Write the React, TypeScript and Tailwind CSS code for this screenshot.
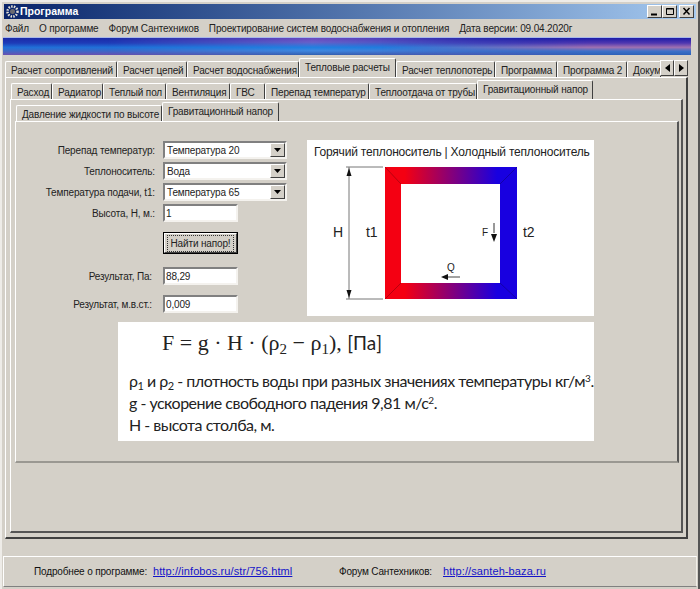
import type { ReactNode } from "react";

const TOP_TABS = [
  { label: "Расчет сопротивлений", w: "w-[112px]" },
  { label: "Расчет цепей", w: "w-[70px]" },
  { label: "Расчет водоснабжения", w: "w-[112px]" },
  { label: "Тепловые расчеты", w: "w-[97px]", active: true },
  { label: "Расчет теплопотерь", w: "w-[99px]" },
  { label: "Программа", w: "w-[62px]" },
  { label: "Программа 2", w: "w-[70px]" },
  { label: "Документация", w: "w-[34px]" },
];

const SUB_TABS = [
  { label: "Расход", w: "w-[41px]" },
  { label: "Радиатор", w: "w-[51px]" },
  { label: "Теплый пол", w: "w-[63px]" },
  { label: "Вентиляция", w: "w-[64px]" },
  { label: "ГВС", w: "w-[35px]" },
  { label: "Перепад температур", w: "w-[104px]" },
  { label: "Теплоотдача от трубы", w: "w-[108px]" },
  { label: "Гравитационный напор", w: "w-[116px]", active: true },
];

const raised =
  "border border-t-white border-l-white border-r-[#404040] border-b-[#404040]";
const sunken =
  "border-2 border-t-[#808080] border-l-[#808080] border-r-[#f4f2ee] border-b-[#f4f2ee]";

function Tab({ label, w, active }: { label: string; w: string; active?: boolean }) {
  return (
    <div
      className={`${w} shrink-0 overflow-hidden whitespace-nowrap rounded-t-[2px] border-t border-l border-r border-t-white border-l-white border-r-[#404040] bg-[#d4d0c8] pl-[5px] leading-[15px] text-[#222] ${
        active ? "relative z-10 -mb-px h-[19px] pt-[1px]" : "mt-[3px] h-[16px] pt-[1px]"
      }`}
    >
      {label}
    </div>
  );
}

function Select({ value }: { value: string }) {
  return (
    <div className={`flex h-[18px] w-[124px] items-center bg-white pl-[2px] ${sunken}`}>
      <span className="flex-1 text-[#222]">{value}</span>
      <span className={`flex h-[14px] w-[15px] items-center justify-center bg-[#d4d0c8] ${raised}`}>
        <svg width="7" height="4" viewBox="0 0 7 4">
          <path d="M0 0h7L3.500 4z" fill="#000" />
        </svg>
      </span>
    </div>
  );
}

function Input({ value }: { value: string }) {
  return (
    <div className={`flex h-[18px] w-[75px] items-center bg-white pl-[1px] text-[#222] ${sunken}`}>
      {value}
    </div>
  );
}

function Row({ label, mt, inset, children }: { label: string; mt: string; inset?: boolean; children: ReactNode }) {
  return (
    <div className={`flex items-center ${mt}`}>
      <div className={`w-[139px] shrink-0 whitespace-nowrap text-right text-[#222] ${inset ? "pr-[3px]" : ""}`}>
        {label}
      </div>
      <div className="ml-[8px]">{children}</div>
    </div>
  );
}

function CaptionButton({ children }: { children: ReactNode }) {
  return (
    <div className={`flex h-[13px] w-[15px] items-center justify-center bg-[#d4d0c8] ${raised}`}>
      <svg width="10" height="9" viewBox="0 0 10 9" fill="none" stroke="#000">
        {children}
      </svg>
    </div>
  );
}

function ScrollArrow({ d }: { d: string }) {
  return (
    <div className={`flex h-[16px] w-[14px] items-center justify-center bg-[#d4d0c8] ${raised}`}>
      <svg width="5" height="8" viewBox="0 0 5 8">
        <path d={d} fill="#000" />
      </svg>
    </div>
  );
}

function Diagram() {
  return (
    <svg width="287" height="150" viewBox="307 165 287 150" className="block">
      <defs>
        <linearGradient id="pipe" x1="385" x2="517" y1="0" y2="0" gradientUnits="userSpaceOnUse">
          <stop offset="0" stopColor="#f40012" />
          <stop offset="0.15" stopColor="#f40012" />
          <stop offset="0.85" stopColor="#1800e0" />
          <stop offset="1" stopColor="#1800e0" />
        </linearGradient>
      </defs>
      <path d="M385 166h132v132h-132zM401 183v99h99v-99z" fill="url(#pipe)" fillRule="evenodd" />
      <path d="M385 166l16 17M517 166l-17 17M385 298l16-16M517 298l-17-16" stroke="#000" strokeOpacity="0.35" strokeWidth="0.7" />
      <path d="M346 166h37M346 298h37M349 166v132" stroke="#777" strokeWidth="1" fill="none" />
      <path d="M349 167l-2.500 8h5zM349 297l-2.500-8h5z" fill="#111" />
      <path d="M494 222v10" stroke="#333" />
      <path d="M491 233h6l-3 8z" fill="#111" />
      <path d="M460 276h-12" stroke="#444" />
      <path d="M448 273v6l-7-3z" fill="#111" />
      <g fontFamily="'Liberation Sans', sans-serif" fill="#222">
        <text x="333" y="236" fontSize="14">H</text>
        <text x="366" y="236" fontSize="14">t1</text>
        <text x="523" y="236" fontSize="14">t2</text>
        <text x="482" y="235" fontSize="10">F</text>
        <text x="447" y="270" fontSize="10">Q</text>
      </g>
    </svg>
  );
}

export default function App() {
  return (
    <div className="h-[589px] w-[700px] overflow-hidden border-t-2 border-l-2 border-r-2 border-t-[#eeece8] border-l-[#eeece8] border-r-[#555] bg-[#d4d0c8] font-['Liberation_Sans',sans-serif] text-[10px] tracking-[-0.15px]">
      {/* title bar */}
      <div className="mx-[2px] mt-[2px] flex h-[15px] items-center bg-gradient-to-r from-[#0a246a] to-[#a6caf0] pl-[2px] pr-[2px] text-white">
        <svg width="13" height="13" viewBox="0 0 13 13" className="mr-[1px]">
          <circle cx="6.500" cy="6.500" r="5" fill="none" stroke="#e8e4d8" strokeWidth="2.500" strokeDasharray="1.500 1.200" />
          <circle cx="6.500" cy="6.500" r="2.500" fill="#6a6a70" />
        </svg>
        <span className="flex-1 text-[10.500px] font-bold tracking-normal">Программа</span>
        <div className="flex">
          <CaptionButton>
            <path d="M1 7.500h6" strokeWidth="2" />
          </CaptionButton>
          <CaptionButton>
            <path d="M1.500 1.500h7v6h-7zM1 2h8" />
          </CaptionButton>
          <div className="ml-[2px]">
            <CaptionButton>
              <path d="M1.500 1l6 6.500M7.500 1l-6 6.500" strokeWidth="1.500" />
            </CaptionButton>
          </div>
        </div>
      </div>

      {/* menu */}
      <div className="flex h-[18px] items-center gap-[10px] pl-[3px] text-[#222]">
        <span>Файл</span>
        <span>О программе</span>
        <span>Форум Сантехников</span>
        <span>Проектирование систем водоснабжения и отопления</span>
        <span>Дата версии: 09.04.2020г</span>
      </div>

      {/* banner: three blended colour bands, left to right */}
      <div className="relative ml-[1px] mr-[7px] h-[18px] overflow-hidden border-t border-t-[#a8b8e8] bg-[linear-gradient(to_bottom,#1a2aa8_0%,#1e3cb8_30%,#2070d8_55%,#3a68c8_75%,#6a50b0_100%)]">
        <div className="absolute inset-0 bg-[linear-gradient(to_bottom,#6a48c0_0%,#6860c8_25%,#2080e0_55%,#4088e0_75%,#3060b0_100%)] [mask-image:linear-gradient(to_right,transparent_15%,black_45%,transparent_80%)]" />
        <div className="absolute inset-0 bg-[linear-gradient(to_bottom,#1c1ca8_0%,#5038b0_30%,#a070b0_55%,#3a70c8_78%,#2c60b8_100%)] [mask-image:linear-gradient(to_right,transparent_55%,black_85%)]" />
      </div>

      {/* outer tabs */}
      <div className="relative mt-[3px] flex h-[19px] pl-[3px]">
        {TOP_TABS.map((tab) => (
          <Tab key={tab.label} {...tab} />
        ))}
        <div className="absolute right-[10px] top-[2px] flex bg-[#d4d0c8]">
          <ScrollArrow d="M0 4l5-4v8z" />
          <ScrollArrow d="M5 4L0 0v8z" />
        </div>
      </div>

      {/* outer page */}
      <div className="ml-[3px] mr-[10px] h-[462px] border-t border-l border-r-2 border-b-2 border-t-white border-l-white border-r-[#404040] border-b-[#404040] pl-[4px] pr-[3px] pt-[2px]">
        <div className="flex h-[19px] pl-[1px]">
          {SUB_TABS.map((tab) => (
            <Tab key={tab.label} {...tab} />
          ))}
        </div>

        <div className="h-[434px] border-t border-l border-r-2 border-b-2 border-t-white border-l-white border-r-[#555] border-b-[#555] pl-[4px] pr-[2px] pt-[2px]">
          <div className="flex h-[19px] pl-[1px]">
            <Tab label="Давление жидкости по высоте" w="w-[146px]" />
            <Tab label="Гравитационный напор" w="w-[117px]" active />
          </div>

          <div className="h-[342px] border-t border-l border-r-2 border-b-2 border-t-white border-l-white border-r-[#555] border-b-[#9a9892]">
            <div className="flex items-start">
              {/* form */}
              <div className="w-[291px] pt-[19px]">
                <Row label="Перепад температур:" mt="mt-0">
                  <Select value="Температура 20" />
                </Row>
                <Row label="Теплоноситель:" mt="mt-[3px]">
                  <Select value="Вода" />
                </Row>
                <Row label="Температура подачи, t1:" mt="mt-[3px]">
                  <Select value="Температура 65" />
                </Row>
                <Row label="Высота, Н, м.:" mt="mt-[3px]">
                  <Input value="1" />
                </Row>
                <div className="ml-[147px] mt-[10px]">
                  <div className="flex h-[22px] w-[75px] items-center justify-center border border-black bg-[#d4d0c8]">
                    <div className="flex h-[20px] w-[73px] items-center justify-center border border-t-white border-l-white border-r-[#404040] border-b-[#404040]">
                      <span className="whitespace-nowrap border border-dotted border-[#333] px-[3px] text-[#222]">Найти напор!</span>
                    </div>
                  </div>
                </div>
                <Row label="Результат, Па:" mt="mt-[13px]" inset>
                  <Input value="88,29" />
                </Row>
                <Row label="Результат, м.в.ст.:" mt="mt-[10px]" inset>
                  <Input value="0,009" />
                </Row>
              </div>

              {/* loop picture */}
              <div className="mt-[18px] h-[176px] w-[287px] bg-white">
                <div className="h-[26px] whitespace-nowrap pl-[7px] pt-[5px] text-[12px] leading-[14px] tracking-[-0.2px] text-[#222]">
                  Горячий теплоноситель | Холодный теплоноситель
                </div>
                <Diagram />
              </div>
            </div>

            {/* formula picture */}
            <div className="ml-[102px] mt-[6px] h-[119px] w-[476px] whitespace-nowrap bg-white pl-[11px] font-['Lato',sans-serif] text-[16px] leading-[22px] tracking-[-0.5px] text-[#222]">
              <div className="h-[48px] pl-[33px] pt-[9px] font-['Liberation_Serif',serif] text-[22px] leading-[24px] tracking-normal">
                F = g · H · (ρ<sub className="text-[15px]">2</sub> − ρ<sub className="text-[15px]">1</sub>),{" "}
                <span className="font-['Lato',sans-serif] text-[19px]">[Па]</span>
              </div>
              <div>
                ρ<sub className="text-[11px]">1</sub> и ρ<sub className="text-[11px]">2</sub> - плотность воды при разных значениях температуры кг/м
                <sup className="text-[10px]">3</sup>.
              </div>
              <div>
                g - ускорение свободного падения 9,81 м/с<sup className="text-[10px]">2</sup>.
              </div>
              <div>Н - высота столба, м.</div>
            </div>
          </div>
        </div>
      </div>

      {/* footer */}
      <div className="mx-[1px] mt-[17px] flex h-[31px] items-center border border-t-white border-l-white border-r-[#f0eee8] border-b-[#808080] pl-[30px] text-[#111]">
        <span className="w-[119px] shrink-0 whitespace-nowrap">Подробнее о программе:</span>
        <a className="w-[186px] shrink-0 text-[11px] tracking-[0.1px] text-[#1414c8] underline">http://infobos.ru/str/756.html</a>
        <span className="w-[104px] shrink-0 whitespace-nowrap">Форум Сантехников:</span>
        <a className="text-[11px] tracking-[0.1px] text-[#1414c8] underline">http://santeh-baza.ru</a>
      </div>
    </div>
  );
}
